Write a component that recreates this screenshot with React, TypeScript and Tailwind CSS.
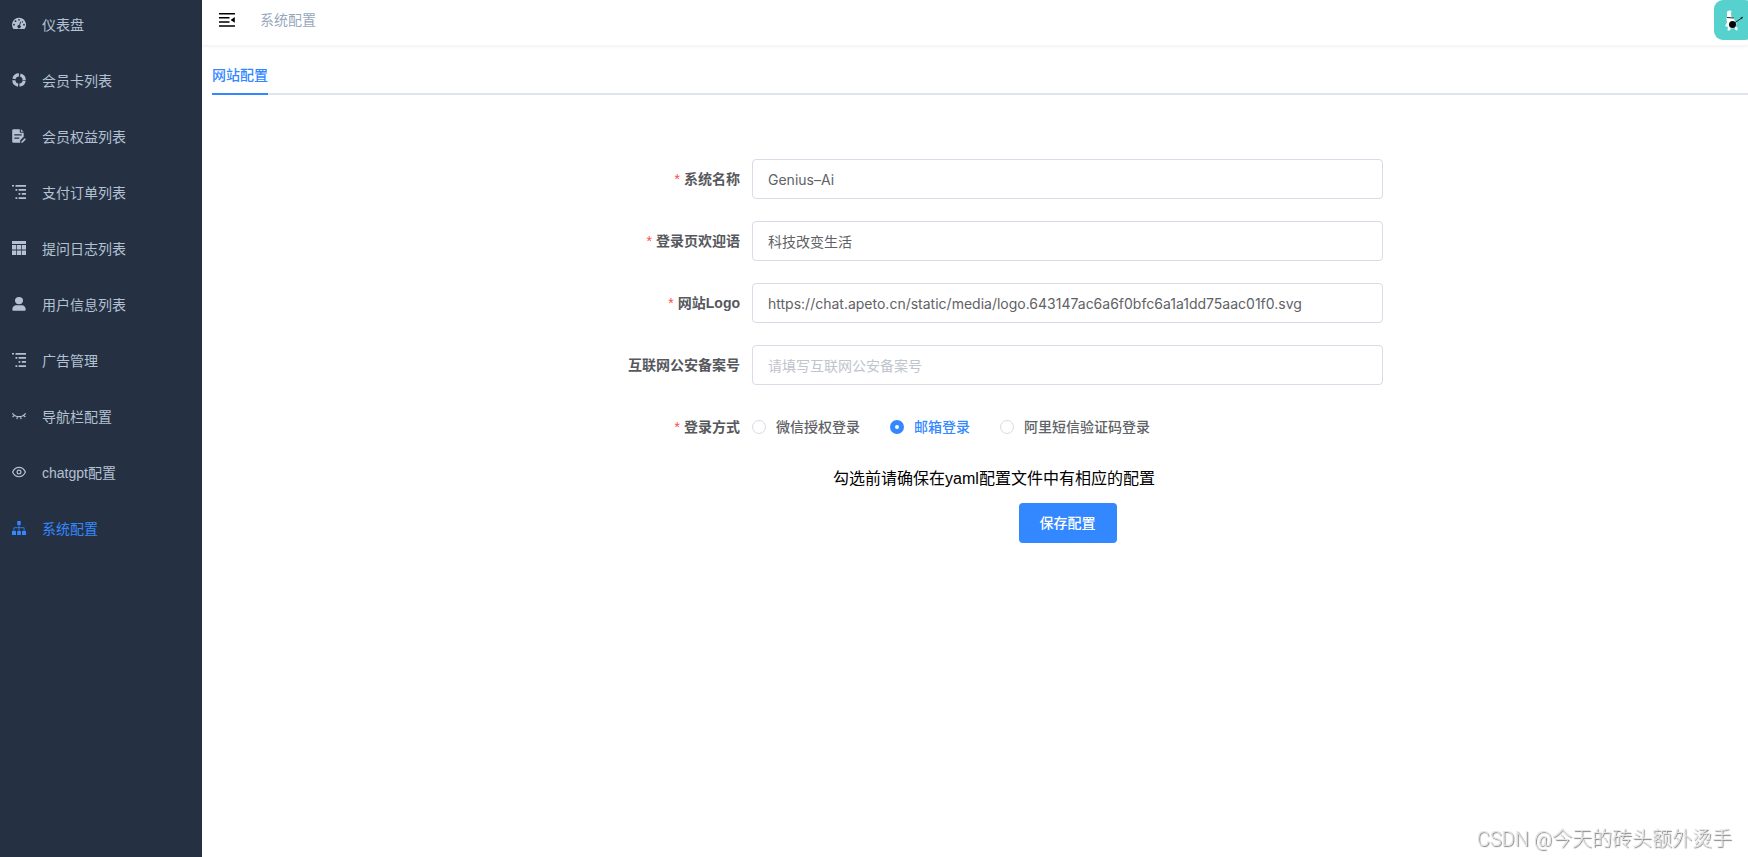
import { useState } from "react";
import type { ReactNode } from "react";

const Icon = ({ children, size = 14 }: { children: ReactNode; size?: number }) => (
  <svg
    width={size}
    height={size}
    viewBox="0 0 14 14"
    fill="currentColor"
    className="shrink-0"
    aria-hidden="true"
  >
    {children}
  </svg>
);

const DashboardIcon = () => (
  <Icon>
    <path
      fillRule="evenodd"
      d="M7 .8a7 7 0 0 0-7 7c0 1.400.4 2.700 1.100 3.800.1.200.3.300.5.300h10.800c.2 0 .4-.1.500-.3A7 7 0 0 0 7 .8ZM7 1.900a.9.900 0 1 1 0 1.800.9.900 0 0 1 0-1.800ZM3.500 3.300a.9.900 0 1 1 0 1.800.9.900 0 0 1 0-1.800ZM2 6.800A.9.900 0 1 1 2 8.600a.9.900 0 0 1 0-1.800ZM12 6.800A.9.900 0 1 1 12 8.600a.9.900 0 0 1 0-1.800ZM10.900 4.200a.9.900 0 0 1 .1 1.100.9.900 0 0 1-1.200.1.900.9 0 0 1 1.100-1.200ZM8.300 4.500l.8.300-1.100 3.500a1.600 1.600 0 1 1-.9-.3Z"
    />
  </Icon>
);

const HelpIcon = () => (
  <Icon>
    <circle
      cx="7"
      cy="7"
      r="5.200"
      fill="none"
      stroke="currentColor"
      strokeWidth="3.200"
      strokeDasharray="6.768 1.4"
      strokeDashoffset="-0.7"
    />
  </Icon>
);

const OrderIcon = () => (
  <Icon>
    <path
      fillRule="evenodd"
      d="M1.500.200h6.300v2.600c0 .6.400 1 1 1h2.900v4L8.200 11.300v2.500H1.500A1.300 1.300 0 0 1 .200 12.500v-11A1.300 1.300 0 0 1 1.500.200ZM2.300 5.200v1.300h7.400V5.200ZM2.300 8.600v1.200h5V8.600Z"
    />
    <path d="M8.900.300l2.700 2.500H8.900ZM12.700 9.200l1.200 1.100-3.100 3.200-1.600.4.300-1.500Z" />
  </Icon>
);

const TreeIcon = () => (
  <Icon>
    <path d="M0 0h2v1.600H0ZM3.500 0H14v1.700H3.500ZM3.500 4h1.800v1.700H3.500ZM6.600 4H14v1.700H6.600ZM6.600 8.100h1.700v1.700H6.600ZM9.800 8.100H14v1.700H9.800ZM3.500 12.200h1.800v1.700H3.500ZM6.600 12.200H14v1.700H6.600Z" />
  </Icon>
);

const GridIcon = () => (
  <Icon>
    <path d="M0 0h14v3H0ZM0 4h4.200v4.400H0ZM4.900 4h4.200v4.400H4.900ZM9.800 4H14v4.400H9.800ZM0 9.500h4.200V14H0ZM4.900 9.500h4.200V14H4.900ZM9.800 9.500H14V14H9.800Z" />
  </Icon>
);

const UserIcon = () => (
  <Icon>
    <ellipse cx="7" cy="3.600" rx="4" ry="3.600" />
    <path d="M3.600 8.200h6.800c2 .4 3.300 2 3.300 4.200 0 .9-.5 1.400-1.400 1.400H1.700c-.9 0-1.400-.5-1.400-1.400 0-2.200 1.300-3.800 3.300-4.200Z" />
  </Icon>
);

const ClosedEyeIcon = () => (
  <Icon>
    <path
      d="M.4 4.200C3 8.700 11 8.700 13.600 4.200M2.300 6.300.600 8M5.500 7.600l-.6 2.600M8.500 7.600l.6 2.600M11.700 6.300l1.700 1.700"
      fill="none"
      stroke="currentColor"
      strokeWidth="1.2"
    />
  </Icon>
);

const EyeIcon = () => (
  <Icon>
    <g fill="none" stroke="currentColor" strokeWidth="1.200">
      <path d="M.6 7C3.400.700 10.600.700 13.400 7 10.600 13.300 3.400 13.300.6 7Z" />
      <circle cx="7" cy="7" r="1.900" />
    </g>
  </Icon>
);

const OrgIcon = () => (
  <Icon>
    <path d="M5.300 0h3.400v4H5.300ZM0 10h4v4H0ZM5.200 10h3.700v4H5.200ZM10 10h4v4h-4Z" />
    <path
      d="M7 4v6M1.900 10V6.700h10.200V10"
      fill="none"
      stroke="currentColor"
      strokeWidth="0.8"
    />
  </Icon>
);

const menu = [
  { label: "仪表盘", icon: DashboardIcon },
  { label: "会员卡列表", icon: HelpIcon },
  { label: "会员权益列表", icon: OrderIcon },
  { label: "支付订单列表", icon: TreeIcon },
  { label: "提问日志列表", icon: GridIcon },
  { label: "用户信息列表", icon: UserIcon },
  { label: "广告管理", icon: TreeIcon },
  { label: "导航栏配置", icon: ClosedEyeIcon },
  { label: "chatgpt配置", icon: EyeIcon },
  { label: "系统配置", icon: OrgIcon },
];

const fields = [
  { id: "name", label: "系统名称", required: true, placeholder: "" },
  { id: "welcome", label: "登录页欢迎语", required: true, placeholder: "" },
  { id: "logo", label: "网站Logo", required: true, placeholder: "" },
  { id: "record", label: "互联网公安备案号", required: false, placeholder: "请填写互联网公安备案号" },
];

const loginTypes = [
  { value: "wechat", label: "微信授权登录" },
  { value: "email", label: "邮箱登录" },
  { value: "sms", label: "阿里短信验证码登录" },
];

export default function App() {
  const [active, setActive] = useState("系统配置");
  const [loginType, setLoginType] = useState("email");
  const [form, setForm] = useState<Record<string, string>>({
    name: "Genius–Ai",
    welcome: "科技改变生活",
    logo: "https://chat.apeto.cn/static/media/logo.643147ac6a6f0bfc6a1a1dd75aac01f0.svg",
    record: "",
  });

  return (
    <div className="flex min-h-screen bg-white font-['Liberation_Sans','Noto_Sans_CJK_SC',sans-serif] text-sm">
      {/* Sidebar */}
      <nav className="w-[202px] shrink-0 bg-[#253142]">
        <ul className="flex flex-col gap-2">
          {menu.map((item) => {
            const ItemIcon = item.icon;
            return (
              <li key={item.label}>
                <a
                  href="#"
                  onClick={() => setActive(item.label)}
                  className={`flex h-12 items-center gap-4 px-3 ${
                    active === item.label ? "text-[#3388ff]" : "text-[#b4c1d3]"
                  }`}
                >
                  <ItemIcon />
                  <span className="pt-0.5">{item.label}</span>
                </a>
              </li>
            );
          })}
        </ul>
      </nav>

      <div className="flex min-w-0 flex-1 flex-col">
        {/* Top bar */}
        <header className="overflow-hidden pb-[5px] pl-4 shadow-[0_1px_4px_rgba(0,21,41,0.08)]">
          <div className="flex h-10 items-center">
            <button type="button" aria-label="收起菜单" className="text-black">
              <svg width="18" height="16" viewBox="0 0 18 16" fill="currentColor">
                <path d="M1 1h16v1.500H1ZM1 5h10.500v1.500H1ZM1 9.200h10.500v1.500H1ZM1 13.300h16v1.500H1ZM16.800 5v5.800L12.600 7.900Z" />
              </svg>
            </button>
            <span className="ml-6 text-[#97a8be]">系统配置</span>
            <svg
              width="40"
              height="40"
              viewBox="0 0 40 40"
              className="-mr-1.5 ml-auto shrink-0"
              role="img"
              aria-label="头像"
            >
              <rect width="40" height="40" rx="9" fill="#56d1cd" />
              <path
                d="M13 12c1-1.500 4-2 4.500-.5l-.5 2 .5 3.500 2.500.5.5 3 2 2-.5 4 1.500 1v3l-2-.5-1-2-4 .5-.5 2h-2.500l.5-3.500-3-1 2-3.500-.5-4 .5-2Z"
                fill="#fff"
              />
              <path d="M13 17.500l7 .5M19 24l9.500-6.500" stroke="#1f2a2a" strokeWidth="1" />
              <path d="M26 18l3-1.500-1 2.500Z" fill="#1f2a2a" />
              <circle cx="18.500" cy="24.500" r="3.500" fill="#050505" />
            </svg>
          </div>
        </header>

        <main className="flex-1 pl-2.5 pt-2.5">
          <div className="flex h-10 border-b-2 border-[#dfe4ed]" role="tablist">
            <button
              type="button"
              role="tab"
              aria-selected="true"
              className="-mb-0.5 h-10 border-b-2 border-[#3388ff] pt-0.5 font-medium text-[#3388ff]"
            >
              网站配置
            </button>
          </div>

          <form
            className="mx-auto mt-16 w-full max-w-[806px]"
            onSubmit={(e) => e.preventDefault()}
          >
            <div className="flex flex-col gap-[22px]">
              {fields.map((field) => (
                <div key={field.id} className="flex h-10 items-center">
                  <label
                    htmlFor={field.id}
                    className="w-[175px] shrink-0 pr-3 text-right font-bold text-[#56585d]"
                  >
                    {field.required && <span className="mr-1 font-normal text-[#ff4949]">*</span>}
                    {field.label}
                  </label>
                  <input
                    id={field.id}
                    type="text"
                    value={form[field.id]}
                    placeholder={field.placeholder}
                    onChange={(e) => setForm({ ...form, [field.id]: e.target.value })}
                    className="h-10 min-w-0 flex-1 rounded border border-[#d9dbe6] px-[15px] font-['Inter','Noto_Sans_CJK_SC',sans-serif] text-[#606266] outline-none placeholder:text-[#c0c4cc]"
                  />
                </div>
              ))}

              <div
                role="radiogroup"
                aria-labelledby="login-type"
                className="flex h-10 items-center"
              >
                <span
                  id="login-type"
                  className="w-[175px] shrink-0 pr-3 text-right font-bold text-[#56585d]"
                >
                  <span className="mr-1 font-normal text-[#ff4949]">*</span>
                  登录方式
                </span>
                <div className="flex gap-[30px]">
                  {loginTypes.map((type) => (
                    <label
                      key={type.value}
                      className={`flex items-center gap-2.5 font-medium ${
                        loginType === type.value ? "text-[#3388ff]" : "text-[#606266]"
                      }`}
                    >
                      <input
                        type="radio"
                        name="loginType"
                        value={type.value}
                        checked={loginType === type.value}
                        onChange={() => setLoginType(type.value)}
                        className="size-3.5 appearance-none rounded-full border border-[#d9dbe6] bg-white checked:border-[5px] checked:border-[#3388ff]"
                      />
                      {type.label}
                    </label>
                  ))}
                </div>
              </div>
            </div>

            <p className="mt-5 pl-7 text-center text-base text-black">
              勾选前请确保在yaml配置文件中有相应的配置
            </p>
            <div className="mt-3 flex justify-center pl-[175px]">
              <button
                type="submit"
                className="h-10 rounded bg-[#3388ff] px-[21px] font-medium text-white"
              >
                保存配置
              </button>
            </div>
          </form>
        </main>
      </div>

      <div className="fixed bottom-1 right-4 font-['Roboto','Noto_Sans_CJK_SC',sans-serif] text-xl font-light text-[#e4e4e4] [text-shadow:1px_1px_1px_#808080]">
        CSDN @今天的砖头额外烫手
      </div>
    </div>
  );
}
